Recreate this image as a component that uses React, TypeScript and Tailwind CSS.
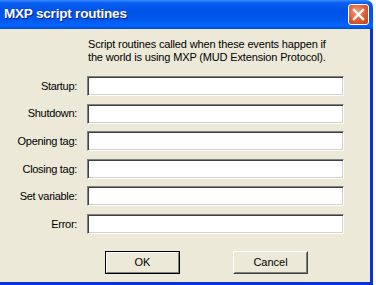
const rows = [
  "Startup:",
  "Shutdown:",
  "Opening tag:",
  "Closing tag:",
  "Set variable:",
  "Error:",
];

function CloseButton() {
  return (
    <div className="w-[21px] h-[21px] rounded-[3px] border border-white flex items-center justify-center bg-[radial-gradient(circle_at_40%_35%,#f0a080_0%,#e0643c_45%,#c23a12_100%)]">
      <svg width="13" height="13" viewBox="0 0 13 13">
        <path d="M2 2 L11 11 M11 2 L2 11" stroke="white" strokeWidth="2.4" strokeLinecap="square" />
      </svg>
    </div>
  );
}

function Field({ label }: { label: string }) {
  return (
    <div className="flex items-center">
      <div className="w-[78px] text-right pr-[1px] tracking-[-0.3px]">{label}</div>
      <input
        className="ml-[9px] w-[257px] h-[20px] bg-white outline-none border border-t-[#808080] border-l-[#808080] border-b-white border-r-white shadow-[inset_1px_1px_0_#404040,inset_-1px_-1px_0_#d4d0c8]"
      />
    </div>
  );
}

function Button({ label, isDefault }: { label: string; isDefault?: boolean }) {
  return (
    <div
      className={
        isDefault
          ? "w-[75px] h-[23px] border border-black"
          : "w-[75px] h-[23px] border border-t-white border-l-white border-b-[#404040] border-r-[#404040]"
      }
    >
      <div
        className={
          isDefault
            ? "h-full flex items-center justify-center bg-[#ece9d8] border border-t-white border-l-white border-b-[#808080] border-r-[#808080]"
            : "h-full flex items-center justify-center bg-[#ece9d8] border border-t-[#ece9d8] border-l-[#ece9d8] border-b-[#808080] border-r-[#808080]"
        }
      >
        {label}
      </div>
    </div>
  );
}

export default function App() {
  return (
    <div className="w-[376px] h-[285px] bg-white flex" style={{ fontFamily: '"Liberation Sans", Arial, sans-serif' }}>
      <div className="w-[373px] h-[285px] flex flex-col rounded-tr-[7px] overflow-hidden">
        <div className="h-[29px] flex items-center justify-between pl-[4px] pr-[4px] bg-[linear-gradient(to_bottom,#3a8cff_0%,#0a5ff2_10%,#0053e6_35%,#0058ee_70%,#0566ff_88%,#0049d8_100%)]">
          <span className="text-white font-bold text-[13.5px] tracking-[-0.2px] [text-shadow:1px_1px_0_#0a1e80]">
            MXP script routines
          </span>
          <CloseButton />
        </div>
        <div className="flex-1 bg-[#0831d9] pr-[3px] pb-[3px]">
          <div className="h-full bg-[#ece9d8] text-[11px] text-black flex flex-col">
            <p className="ml-[88px] mt-[9px] leading-[13px] tracking-[-0.15px]">
              Script routines called when these events happen if
              <br />
              the world is using MXP (MUD Extension Protocol).
            </p>
            <div className="mt-[12px] flex flex-col gap-[7.6px]">
              {rows.map((r) => (
                <Field key={r} label={r} />
              ))}
            </div>
            <div className="mt-[17px] flex pl-[105px] gap-[53px]">
              <Button label="OK" isDefault />
              <Button label="Cancel" />
            </div>
          </div>
        </div>
      </div>
    </div>
  );
}
